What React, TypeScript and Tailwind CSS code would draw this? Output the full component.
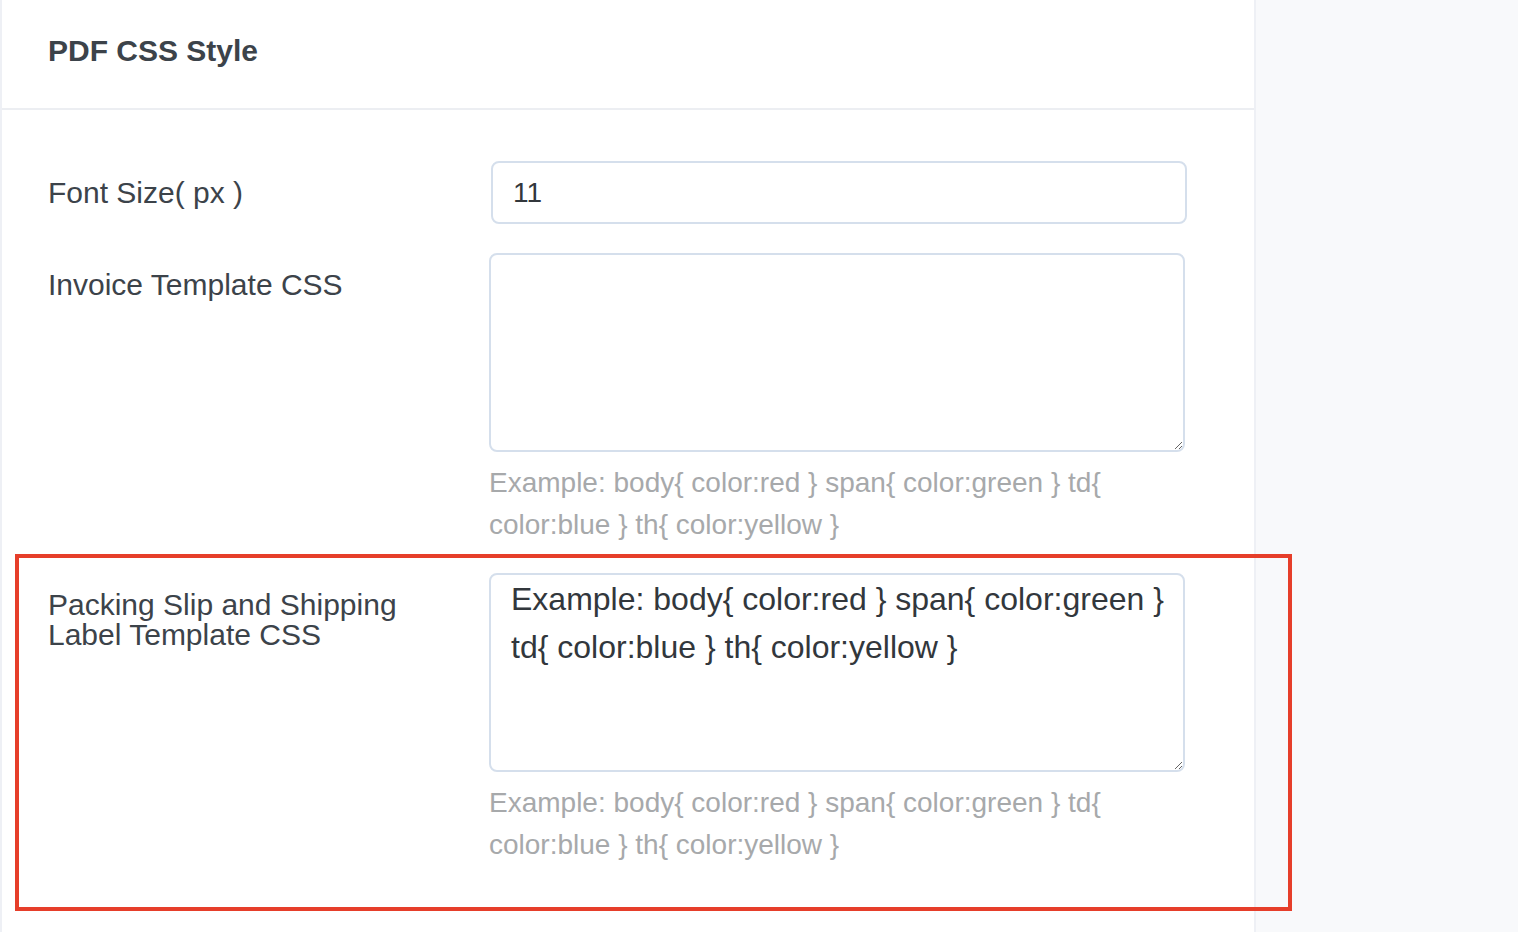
import React from 'react';

const hint = 'Example: body{ color:red } span{ color:green } td{ color:blue } th{ color:yellow }';

function Row({ label, children, className = '' }: { label: React.ReactNode; children: React.ReactNode; className?: string }) {
  return (
    <div className={`flex ${className}`}>
      <div className="w-[487px] shrink-0 pl-[46px] pt-[17px] text-[30px] text-[#3c434a] leading-[30px]">{label}</div>
      <div className="w-[697px]">{children}</div>
    </div>
  );
}

export default function App() {
  return (
    <div className="relative flex min-h-[932px] bg-[#f8f9fb] font-['Liberation_Sans',Arial,sans-serif]">
      <div className="w-[1256px] border-l-2 border-r-2 border-[#eef0f5] bg-white">
        <div className="h-[110px] border-b-2 border-[#eceef2] pl-[46px] pt-[33px]">
          <h2 className="text-[30px] leading-[36px] font-bold text-[#3c434a]">PDF CSS Style</h2>
        </div>

        <div className="pt-[51px]">
          <Row label="Font Size( px )">
            <input
              defaultValue="11"
              className="ml-[2px] h-[63px] w-[696px] rounded-[8px] border-2 border-[#d5dfec] px-[20px] text-[28px] text-[#32373c] outline-none"
            />
          </Row>

          <Row className="mt-[29px]" label="Invoice Template CSS">
            <textarea className="block h-[199px] w-[696px] rounded-[8px] border-2 border-[#d5dfec] px-[20px] py-[8px] text-[32px] text-[#32373c] outline-none" />
            <p className="mt-[10px] w-[640px] text-[28px] leading-[42px] text-[#a7a9ab]">{hint}</p>
          </Row>

          <Row className="mt-[27px]" label={<>Packing Slip and Shipping<br />Label Template CSS</>}>
            <textarea
              defaultValue="Example: body{ color:red } span{ color:green } td{ color:blue } th{ color:yellow }"
              className="block h-[199px] w-[696px] rounded-[8px] border-2 border-[#d5dfec] pl-[20px] pr-[8px] pt-0 text-[32px] leading-[48px] text-[#32373c] outline-none resize-y"
            />
            <p className="mt-[10px] w-[640px] text-[28px] leading-[42px] text-[#a7a9ab]">{hint}</p>
          </Row>
        </div>
      </div>

      {/* annotation highlight */}
      <div className="pointer-events-none absolute left-[15px] top-[554px] h-[357px] w-[1277px] border-4 border-[#e63e2a]" />
    </div>
  );
}
